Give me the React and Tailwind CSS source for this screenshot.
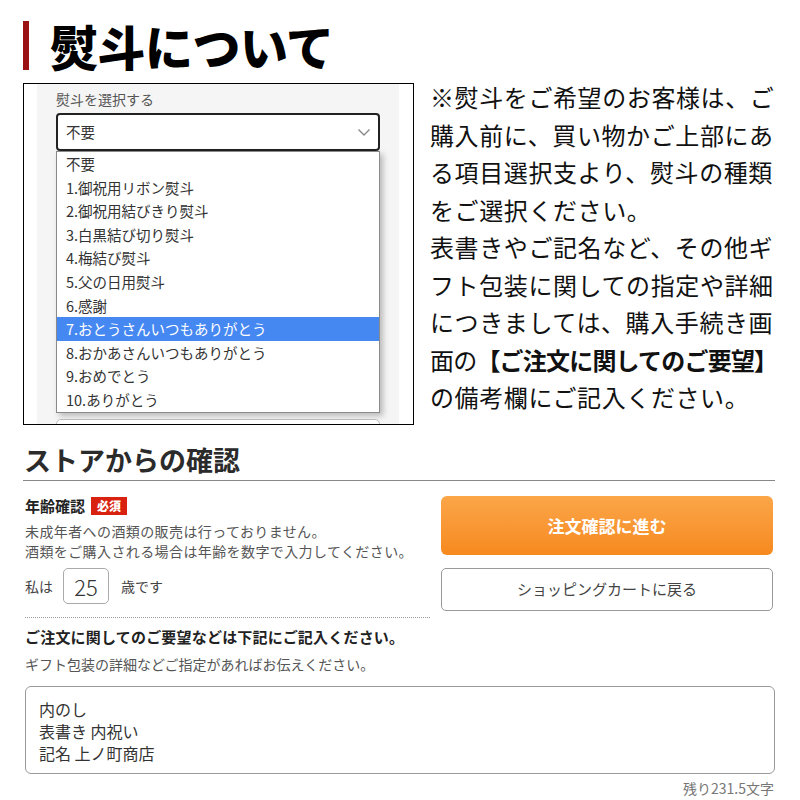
export default function App() {
  const items = [
    "不要",
    "1.御祝用リボン熨斗",
    "2.御祝用結びきり熨斗",
    "3.白黒結び切り熨斗",
    "4.梅結び熨斗",
    "5.父の日用熨斗",
    "6.感謝",
    "7.おとうさんいつもありがとう",
    "8.おかあさんいつもありがとう",
    "9.おめでとう",
    "10.ありがとう",
  ];
  return (
    <div className="w-[800px] h-[800px] bg-white overflow-hidden text-[#333] font-['Noto_Sans_CJK_JP',sans-serif]">
      {/* Title */}
      <div className="flex items-center pt-[21px] pl-[23px]">
        <div className="w-[6px] h-[49px] bg-[#9a1212]" />
        <div className="ml-[21px] text-[48px] leading-[49px] font-black text-black tracking-[-0.5px]">熨斗について</div>
      </div>

      {/* Screenshot + description */}
      <div className="flex mt-[8px]">
        <div className="ml-[23px] mt-[5px] w-[391px] h-[342px] border border-black bg-white overflow-hidden shrink-0">
          <div className="ml-[13px] w-[362px] h-full bg-[#f5f5f5] pl-[19px] pt-[5px]">
            <div className="text-[14px] leading-[20px] text-[#555]">熨斗を選択する</div>
            <div className="mt-[4px] w-[324px] h-[38px] border-2 border-[#222] rounded-[4px] bg-white flex items-center justify-between pl-[8px] pr-[7px]">
              <span className="text-[14.5px] text-[#333]">不要</span>
              <svg width="14" height="9" viewBox="0 0 14 9" fill="none">
                <path d="M1.5 1.5 L7 7 L12.5 1.5" stroke="#888" strokeWidth="1.4" />
              </svg>
            </div>
            <div className="w-[324px] border border-[#8a8a8a] bg-white shadow-[3px_3px_6px_rgba(0,0,0,0.25)]">
              {items.map((t, i) => (
                <div
                  key={t}
                  className={
                    i === 7
                      ? "h-[23.6px] leading-[23.6px] pl-[9px] text-[14.5px] bg-[#4688f1] text-white whitespace-nowrap"
                      : "h-[23.6px] leading-[23.6px] pl-[9px] text-[14.5px] text-[#333] whitespace-nowrap"
                  }
                >
                  {t}
                </div>
              ))}
            </div>
            <div className="mt-[6px] w-[324px] h-[30px] border border-[#bbb] rounded-[5px] bg-white" />
          </div>
        </div>
        <div className="ml-[16px] w-[365px] text-[24px] leading-[37.5px] tracking-[0.6px] text-[#111]">
          <div className="whitespace-nowrap">※熨斗をご希望のお客様は、ご</div>
          <div className="whitespace-nowrap">購入前に、買い物かご上部にあ</div>
          <div className="whitespace-nowrap">る項目選択支より、熨斗の種類</div>
          <div className="whitespace-nowrap">をご選択ください。</div>
          <div className="whitespace-nowrap">表書きやご記名など、その他ギ</div>
          <div className="whitespace-nowrap">フト包装に関しての指定や詳細</div>
          <div className="whitespace-nowrap">につきましては、購入手続き画</div>
          <div className="whitespace-nowrap tracking-[-0.8px]">
            面の<span className="font-bold">【ご注文に関してのご要望】</span>
          </div>
          <div className="whitespace-nowrap">の備考欄にご記入ください。</div>
        </div>
      </div>

      {/* Store confirmation */}
      <div className="ml-[23px] mt-[19px] w-[752px] border-b border-[#888] pb-[4px] pl-[1px] text-[27px] leading-[32px] font-bold text-[#2b2b2b]">
        ストアからの確認
      </div>

      <div className="flex ml-[25px] mt-[15px]">
        <div className="w-[405px]">
          <div className="flex items-center h-[20px]">
            <span className="text-[15px] font-bold text-[#222]">年齢確認</span>
            <span className="ml-[6px] w-[36px] h-[18px] bg-[#d8220f] text-white text-[12px] leading-[18px] font-black text-center">必須</span>
          </div>
          <div className="mt-[5px] text-[14px] leading-[20px] text-[#555] whitespace-nowrap tracking-[0.4px]">未成年者への酒類の販売は行っておりません。</div>
          <div className="text-[14px] leading-[20px] text-[#555] whitespace-nowrap tracking-[0.4px]">酒類をご購入される場合は年齢を数字で入力してください。</div>
          <div className="mt-[7px] flex items-center h-[36px] text-[14px] text-[#444]">
            <span>私は</span>
            <div className="ml-[10px] w-[46px] h-[36px] border border-[#aaa] rounded-[5px] flex items-center justify-center text-[22px] text-[#333] font-light">25</div>
            <span className="ml-[12px]">歳です</span>
          </div>
          <div className="mt-[13px] border-t border-dotted border-[#999] w-[405px]" />
          <div className="mt-[9px] text-[15px] leading-[20px] font-bold text-[#222] whitespace-nowrap tracking-[0.2px]">ご注文に関してのご要望などは下記にご記入ください。</div>
          <div className="mt-[7px] text-[14px] leading-[20px] text-[#555] whitespace-nowrap">ギフト包装の詳細などご指定があればお伝えください。</div>
        </div>
        <div className="ml-[11px] w-[332px]">
          <div className="h-[59px] rounded-[6px] bg-gradient-to-b from-[#fba648] to-[#f6891c] flex items-center justify-center text-white text-[17px] font-bold">
            注文確認に進む
          </div>
          <div className="mt-[13px] h-[43px] rounded-[5px] border border-[#999] bg-white flex items-center justify-center text-[15px] text-[#444]">
            ショッピングカートに戻る
          </div>
        </div>
      </div>

      <div className="ml-[25px] mt-[12px] w-[750px] h-[88px] border border-[#999] rounded-[6px] pl-[13px] pt-[11px] text-[16px] leading-[22px] text-[#333]">
        <div>内のし</div>
        <div>表書き 内祝い</div>
        <div>記名 上ノ町商店</div>
      </div>
      <div className="w-[774px] mt-[5px] text-right text-[14px] leading-[18px] text-[#777]">残り231.5文字</div>
    </div>
  );
}
